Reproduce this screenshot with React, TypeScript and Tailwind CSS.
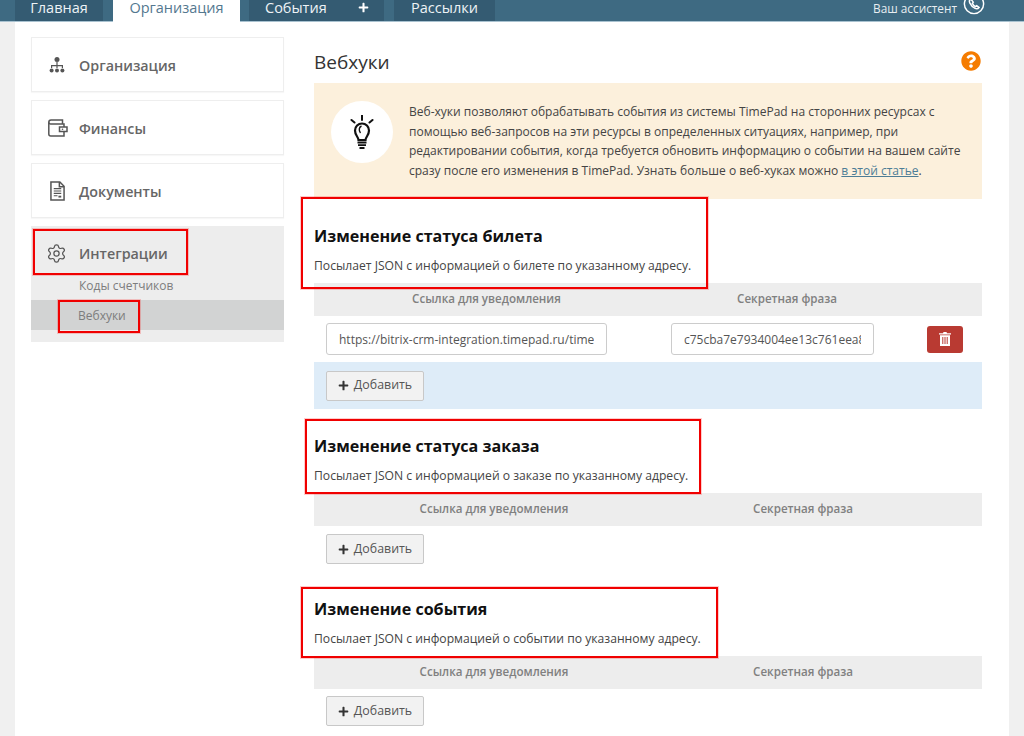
import type { FC, ReactNode } from "react";
import { Settings } from "lucide-react";
import { FaPlus, FaQuestionCircle } from "react-icons/fa";

const OrgIcon = () => (
  <svg width="18" height="18" viewBox="0 0 18 18" fill="#555">
    <circle cx="9" cy="3.5" r="2.5" />
    <path d="M8.4 6h1.2v3H15v3h-1.2v-1.8H9.6V12H8.4v-1.8H4.2V12H3V9h5.4z" />
    <circle cx="3.6" cy="14.5" r="2" />
    <circle cx="9" cy="14.5" r="2" />
    <circle cx="14.4" cy="14.5" r="2" />
  </svg>
);

const WalletIcon = () => (
  <svg width="20" height="18" viewBox="0 0 20 18" fill="none" stroke="#555" strokeWidth="1.500">
    <path d="M16 8V5H2.500A1.700 1.700 0 0 1 .8 3.300C.8 2 1.700 1 3 1h11.500v4" />
    <path d="M.8 3.300V15c0 1.200.8 2 2 2H16v-4.500" />
    <path d="M11.500 8h7.500v4.500h-7.500z" />
    <circle cx="14.500" cy="10.200" r=".8" fill="#555" stroke="none" />
  </svg>
);

const DocIcon = () => (
  <svg width="15" height="20" viewBox="0 0 16 21" fill="none" stroke="#555" strokeWidth="1.600">
    <path d="M1 1h9.500L15 5.500V20H1z" />
    <path d="M10 1v5h5" />
    <path d="M4 8h8M4 10.500h8M4 13h8M4 15.500h4" strokeWidth="1.200" />
    <path d="M9 16.500h3" strokeWidth="2" />
  </svg>
);

const BulbIcon = () => (
  <svg width="24" height="34" viewBox="0 0 24 34" fill="none" stroke="#111" strokeWidth="2">
    <path d="M12 0v5M1.500 5l3 2.500M22.500 5l-3 2.500" strokeLinecap="round" />
    <path d="M8.500 25c0-3-3.500-4.500-3.500-9.500a7 7 0 0 1 14 0c0 5-3.500 6.500-3.500 9.500z" strokeWidth="2.200" />
    <path d="M11.500 11c-2.500 1-3 4.500-1 7" strokeWidth="1.400" />
    <path d="M7.500 27.500h9M8 30.200h8M9.500 33h5" strokeWidth="1.800" />
  </svg>
);

const TrashIcon = () => (
  <svg width="12" height="14" viewBox="0 0 12 14" fill="#fff">
    <path d="M4.500 0h3l.5 1.200H12v1.300H0V1.200h4z" />
    <path d="M1 3.300h10V14H1zM3.300 5v7h1V5zM5.500 5v7h1V5zM7.700 5v7h1V5z" fillRule="evenodd" />
  </svg>
);

const PhoneRing = () => (
  <svg width="22" height="22" viewBox="0 0 24 24" fill="none" stroke="#fff" strokeWidth="1.600" className="-mt-[8px]">
    <circle cx="12" cy="12" r="10.500" />
    <path d="M8.500 6.500c-1.500 1-2 2.500-1 4.500 1.300 2.700 3.300 4.700 5.700 5.800 2 .9 3.300.3 4.300-1l-2.600-2-1.400 1c-1.500-.8-2.600-2-3.300-3.500l1-1.300z" />
  </svg>
);

const SideCard: FC<{ icon: ReactNode; label: string }> = ({ icon, label }) => (
  <div className="flex h-[55px] items-center border border-[#eeeeee] bg-white pl-[16px] shadow-[0_1px_1px_rgba(0,0,0,0.03)]">
    <span className="flex w-[31px] shrink-0">{icon}</span>
    <span className="pt-[3px] text-[14.300px] font-semibold text-[#666666]">{label}</span>
  </div>
);

const TopTab: FC<{ children: ReactNode; className?: string }> = ({ children, className }) => (
  <div className={`flex h-[21px] items-center bg-[#345b72] pb-[6px] text-[14.500px] leading-[14px] text-[#eef3f6] ${className ?? ""}`}>{children}</div>
);

const AddButton = () => (
  <button className="flex h-[30px] w-[98px] items-center justify-center gap-[5px] rounded-[2px] border border-[#c8c8c8] bg-[#f2f2f2] text-[12.400px] text-[#555555]">
    <FaPlus size={11} color="#333" />
    Добавить
  </button>
);

const Section: FC<{ title: string; text: string; columns: string; children?: ReactNode; titleClass: string }> = ({
  title,
  text,
  columns,
  children,
  titleClass,
}) => (
  <section>
    <h2 className={`text-[16.100px] font-bold leading-[22px] text-[#111111] ${titleClass}`}>{title}</h2>
    <p className="mt-[8px] text-[12.150px] leading-[22px] text-[#444444]">{text}</p>
    <div className={`mt-[6px] grid h-[33px] items-center bg-[#ededed] pb-[2px] text-center text-[11.600px] font-semibold text-[#808080] ${columns}`}>
      <span>Ссылка для уведомления</span>
      <span>Секретная фраза</span>
    </div>
    {children}
  </section>
);

const redBox = "pointer-events-none absolute border-[2px] border-[#f00000] shadow-[0_0_0_1px_rgba(255,0,0,0.2)]";

export default function App() {
  return (
    <div className="relative h-[736px] w-[1024px] overflow-hidden bg-[#f0f0f0] font-['Open_Sans',sans-serif]">
      <header className="flex h-[22px] items-start border-b border-[#a9c2d0] bg-[#3e6a82] pl-[15px] pr-[39px]">
        <TopTab className="w-[88px] justify-center">Главная</TopTab>
        <div className="ml-[10px] flex h-[22px] w-[127px] items-center justify-center bg-white pb-[7px] text-[14.500px] leading-[14px] text-[#54788f]">Организация</div>
        <TopTab className="ml-[9px] w-[135px] justify-between pl-[16px] pr-[15px]">
          События
          <FaPlus size={11} color="#fff" />
        </TopTab>
        <TopTab className="ml-[10px] w-[101px] justify-center">Рассылки</TopTab>
        <div className="ml-auto flex h-[21px] items-center gap-[6px] overflow-hidden pb-[6px] text-[11.800px] leading-[14px] text-[#e8eef2]">
          Ваш ассистент
          <PhoneRing />
        </div>
      </header>

      <div className="mx-[15px] flex h-[714px] gap-[30px] bg-white px-[16px] pt-[15px]">
        <aside className="flex w-[253px] shrink-0 flex-col gap-[8px]">
          <SideCard icon={<OrgIcon />} label="Организация" />
          <SideCard icon={<WalletIcon />} label="Финансы" />
          <SideCard icon={<span className="pl-[2px]"><DocIcon /></span>} label="Документы" />
          <div className="h-[116px] bg-[#ededed] pt-[3px]">
            <div className="flex h-[47px] items-center pl-[15px]">
              <span className="flex w-[33px] shrink-0 pt-[1px]">
                <Settings size={21} strokeWidth={1.4} color="#555" />
              </span>
              <span className="pt-[3px] text-[14.300px] font-semibold text-[#666666]">Интеграции</span>
            </div>
            <div className="flex h-[24px] items-center pb-[4px] pl-[48px] text-[12px] text-[#7d7d7d]">Коды счетчиков</div>
            <div className="flex h-[30px] items-center bg-[#d2d3d3] pl-[47px] pt-[2px] text-[12px] text-[#7d7d7d]">Вебхуки</div>
          </div>
        </aside>

        <main className="w-[668px]">
          <div className="flex h-[46px] items-start justify-between pt-[15px]">
            <h1 className="text-[19px] leading-[20px] text-[#333333]">Вебхуки</h1>
            <FaQuestionCircle size={20} color="#f57c00" className="mr-[1px] -mt-[1px]" />
          </div>

          <div className="flex h-[116px] bg-[#fcf0dc] pl-[17px] pr-[10px] pt-[18px]">
            <div className="flex h-[62px] w-[62px] shrink-0 items-center justify-center rounded-full bg-white">
              <BulbIcon />
            </div>
            <p className="ml-[16px] mt-[1px] text-[12.020px] leading-[19.500px] text-[#444444]">
              Веб-хуки позволяют обрабатывать события из системы TimePad на сторонних ресурсах с
              <br />
              помощью веб-запросов на эти ресурсы в определенных ситуациях, например, при
              <br />
              редактировании события, когда требуется обновить информацию о событии на вашем сайте
              <br />
              сразу после его изменения в TimePad. Узнать больше о веб-хуках можно{" "}
              <a className="text-[#4d7d96] underline">в этой статье</a>.
            </p>
          </div>

          <Section
            titleClass="mt-[26px]"
            title="Изменение статуса билета"
            text="Посылает JSON с информацией о билете по указанному адресу."
            columns="grid-cols-[345px_256px_67px]"
          >
            <div className="grid h-[46px] grid-cols-[345px_256px_67px] items-center">
              <div className="pl-[12px]">
                <input
                  readOnly
                  value="https://bitrix-crm-integration.timepad.ru/timepad/webhook"
                  className="h-[32px] w-[281px] rounded-[3px] border border-[#cccccc] px-[12px] text-[12px] text-[#555555]"
                />
              </div>
              <div className="pl-[12px]">
                <input
                  readOnly
                  value="c75cba7e7934004ee13c761eea8f2d10"
                  className="h-[32px] w-[203px] rounded-[3px] border border-[#cccccc] px-[12px] text-[12px] text-[#555555]"
                />
              </div>
              <div className="pl-[12px]">
                <button className="flex h-[27px] w-[36px] items-center justify-center rounded-[3px] bg-[#b93a32]">
                  <TrashIcon />
                </button>
              </div>
            </div>
            <div className="flex h-[47px] items-center bg-[#deecf8] pl-[12px]">
              <AddButton />
            </div>
          </Section>

          <Section
            titleClass="mt-[26px]"
            title="Изменение статуса заказа"
            text="Посылает JSON с информацией о заказе по указанному адресу."
            columns="grid-cols-[360px_258px_50px]"
          >
            <div className="flex h-[50px] items-start pl-[12px] pt-[8px]">
              <AddButton />
            </div>
          </Section>

          <Section
            titleClass="mt-[22px]"
            title="Изменение события"
            text="Посылает JSON с информацией о событии по указанному адресу."
            columns="grid-cols-[360px_258px_50px]"
          >
            <div className="flex h-[47px] items-start pl-[12px] pt-[7px]">
              <AddButton />
            </div>
          </Section>
        </main>
      </div>

      {/* red annotations drawn on top of the screenshot */}
      <div className={`${redBox} left-[301px] top-[197px] h-[92px] w-[407px]`} />
      <div className={`${redBox} left-[33px] top-[229px] h-[46px] w-[155px]`} />
      <div className={`${redBox} left-[58px] top-[300px] h-[33px] w-[82px]`} />
      <div className={`${redBox} left-[305px] top-[419px] h-[75px] w-[396px]`} />
      <div className={`${redBox} left-[301px] top-[587px] h-[71px] w-[417px]`} />
    </div>
  );
}
